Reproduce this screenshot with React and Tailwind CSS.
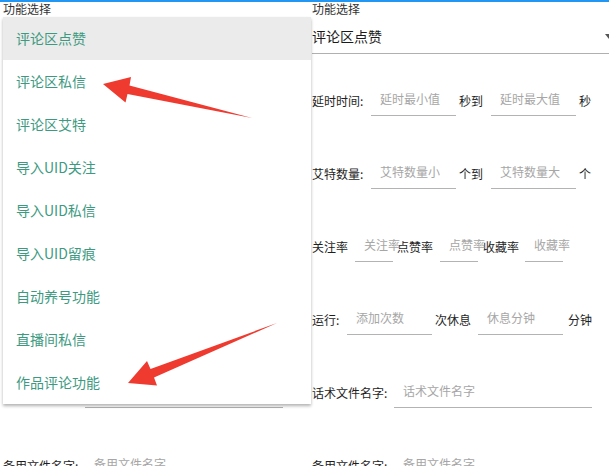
import React from 'react'

const font = { fontFamily: '"Noto Sans CJK SC", "Noto Sans", sans-serif' }

const menuItems = [
  '评论区点赞',
  '评论区私信',
  '评论区艾特',
  '导入UID关注',
  '导入UID私信',
  '导入UID留痕',
  '自动养号功能',
  '直播间私信',
  '作品评论功能',
]

function Field({ width, hint, className = '' }) {
  return (
    <div className={`relative h-[30px] shrink-0 border-b border-[#b3b3b3] ${className}`} style={{ width }}>
      <span className="absolute left-[9px] top-[6px] whitespace-nowrap text-[12px] leading-[14px] text-[#a6a6a6]">
        {hint}
      </span>
    </div>
  )
}

function Label({ children, className = '' }) {
  return (
    <span className={`mb-[8px] shrink-0 whitespace-nowrap text-[12px] leading-[14px] text-[#1e1e1e] ${className}`}>
      {children}
    </span>
  )
}

function Form() {
  return (
    <div className="flex flex-col pl-[3px]">
      <div className="text-[12px] leading-[14px] text-[#333]">功能选择</div>
      <div className="flex items-center justify-between border-b border-[#b0b0b0] pt-[10px] pb-[7px]">
        <span className="text-[14px] leading-[20px] text-[#1a1a1a]">评论区点赞</span>
        <svg width="8" height="5" viewBox="0 0 8 5" className="mr-[-4px]">
          <path d="M0 0h8L4 5z" fill="#555" />
        </svg>
      </div>

      <div className="mt-[32px] flex h-[30px] items-end">
        <Label className="w-[59px]">延时时间:</Label>
        <Field width={85} hint="延时最小值" />
        <Label className="ml-[3px] w-[32px]">秒到</Label>
        <Field width={85} hint="延时最大值" />
        <Label className="ml-[3px]">秒</Label>
      </div>

      <div className="mt-[43px] flex h-[30px] items-end">
        <Label className="w-[59px]">艾特数量:</Label>
        <Field width={85} hint="艾特数量小" />
        <Label className="ml-[3px] w-[32px]">个到</Label>
        <Field width={85} hint="艾特数量大" />
        <Label className="ml-[3px]">个</Label>
      </div>

      <div className="mt-[43px] flex h-[30px] items-end">
        <Label className="w-[43px]">关注率</Label>
        <Field width={38} hint="关注率" />
        <Label className="ml-[4px] w-[43px]">点赞率</Label>
        <Field width={38} hint="点赞率" />
        <Label className="ml-[5px] w-[42px]">收藏率</Label>
        <Field width={38} hint="收藏率" />
      </div>

      <div className="mt-[43px] flex h-[30px] items-end">
        <Label className="w-[35px]">运行:</Label>
        <Field width={85} hint="添加次数" />
        <Label className="ml-[3px] w-[43px]">次休息</Label>
        <Field width={85} hint="休息分钟" />
        <Label className="ml-[5px]">分钟</Label>
      </div>

      <div className="mt-[43px] flex h-[30px] items-end">
        <Label className="w-[82px]">话术文件名字:</Label>
        <Field width={198} hint="话术文件名字" />
      </div>

      <div className="mt-[43px] flex h-[30px] items-end">
        <Label className="w-[82px]">备用文件名字:</Label>
        <Field width={198} hint="备用文件名字" />
      </div>
    </div>
  )
}

export default function App() {
  return (
    <div className="relative h-[466px] w-[609px] overflow-hidden bg-white" style={font}>
      <div className="h-[2px] bg-[#2196f3]" />
      <div className="flex">
        <div className="relative w-[309px] shrink-0">
          <div className="w-[309px] overflow-hidden">
            <Form />
          </div>
          {/* open dropdown of the left screen */}
          <div className="absolute left-[3px] top-[15px] z-10 w-[308px] bg-white shadow-[0_2px_3px_rgba(0,0,0,0.3)]">
            {menuItems.map((item, i) => (
              <div
                key={item}
                className={`flex h-[43px] items-center pl-[13px] text-[14px] text-[#3d9a7f] ${i === 0 ? 'bg-[#ebebeb]' : ''}`}
              >
                {item}
              </div>
            ))}
          </div>
        </div>
        <div className="w-[300px] shrink-0 overflow-hidden">
          <Form />
        </div>
      </div>

      {/* red annotation arrows */}
      <svg className="pointer-events-none absolute left-0 top-0 z-20" width="609" height="466" viewBox="0 0 609 466">
        <polygon
          points="103,84 131,77 129.5,85.5 252,118 127.5,94 125.5,102.5"
          fill="#ee3a2f"
        />
        <polygon
          points="128,383 147,361 150.5,369 277,323 154,377.5 157,385.5"
          fill="#ee3a2f"
        />
      </svg>
    </div>
  )
}
